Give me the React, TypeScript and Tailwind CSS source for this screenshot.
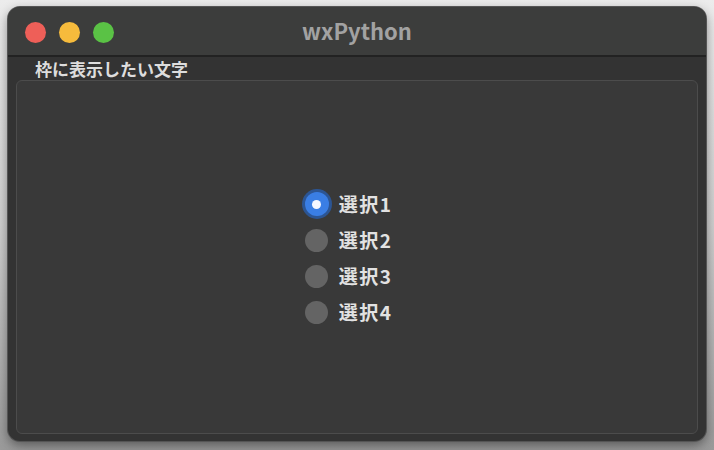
import React from 'react';

const OPTIONS = ['選択1', '選択2', '選択3', '選択4'];

function Radio({ checked }: { checked: boolean }) {
  if (checked) {
    return (
      <span className="flex h-[30px] w-[30px] items-center justify-center rounded-full bg-[#2c5593]">
        <span className="flex h-[24px] w-[24px] items-center justify-center rounded-full bg-[#3a7ee4]">
          <span className="h-[9px] w-[9px] rounded-full bg-[#f4f7ff]" />
        </span>
      </span>
    );
  }
  return (
    <span className="flex h-[30px] w-[30px] items-center justify-center">
      <span className="h-[23px] w-[23px] rounded-full bg-[#646464]" />
    </span>
  );
}

export default function App() {
  return (
    <div className="h-[450px] w-[714px] bg-gradient-to-b from-[#ececec] via-[#d0d0d0] to-[#9a9a9a] px-[8px] pt-[7px]">
      <div
        className="flex h-[434px] flex-col overflow-hidden rounded-[12px] bg-[#333333] shadow-[0_4px_12px_rgba(0,0,0,0.45)] ring-1 ring-[#555555]"
        style={{ fontFamily: '"Noto Sans CJK JP", "Noto Sans", sans-serif' }}
      >
        <div className="relative flex h-[50px] shrink-0 items-center justify-center border-b-2 border-[#222222] bg-[#3c3d3c]">
          <div className="absolute left-[17px] top-[15px] flex gap-[13px]">
            <span className="h-[21px] w-[21px] rounded-full bg-[#ee5f58]" />
            <span className="h-[21px] w-[21px] rounded-full bg-[#f6bb3c]" />
            <span className="h-[21px] w-[21px] rounded-full bg-[#5ac245]" />
          </div>
          <span className="pb-[2px] text-[22px] font-bold text-[#a2a2a2]">wxPython</span>
        </div>
        <div className="flex flex-1 flex-col px-[8px] pb-[7px]">
          <div className="pl-[19px] text-[17px] font-bold leading-[23px] text-[#dddddd]">
            枠に表示したい文字
          </div>
          <div className="flex flex-1 flex-col items-center justify-center rounded-[6px] border border-[#4c4c4c] bg-[#393939] pr-[20px] pt-[2px]">
            <div className="flex flex-col gap-[6px]">
              {OPTIONS.map((label, i) => (
                <div key={label} className="flex items-center gap-[7px]">
                  <Radio checked={i === 0} />
                  <span className="text-[19px] font-bold leading-[30px] tracking-[1.5px] text-[#e2e2e2]">
                    {label}
                  </span>
                </div>
              ))}
            </div>
          </div>
        </div>
      </div>
    </div>
  );
}
